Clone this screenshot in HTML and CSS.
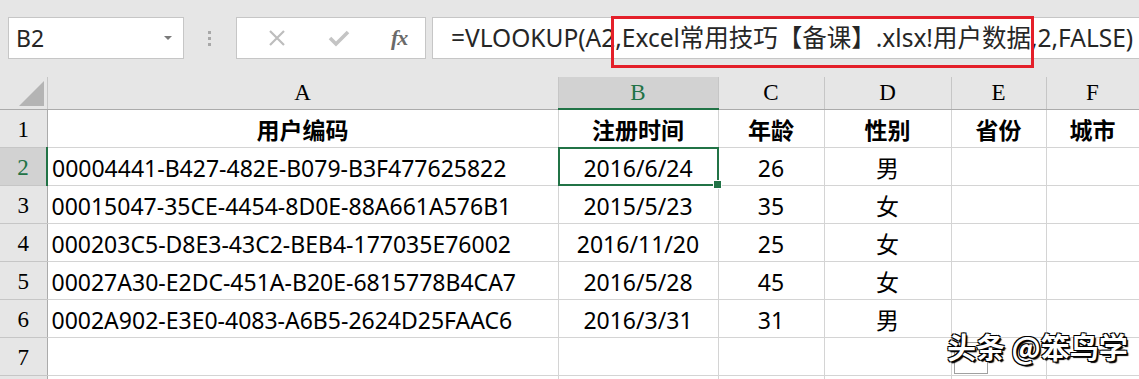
FILE: index.html
```html
<!DOCTYPE html>
<html lang="zh-CN">
<head>
  <meta charset="UTF-8">
  <title>VLOOKUP</title>
  <link rel="stylesheet" href="styles.css">
</head>
<body>
  <div class="app">
    <div class="toolbar">
      <div class="namebox">
        <span>B2</span>
        <span class="caret"></span>
      </div>
      <div class="grip"><i></i><i></i><i></i></div>
      <div class="fxbox">
        <svg class="ico" width="18" height="18" viewBox="0 0 18 18"><path d="M2 2L16 16M16 2L2 16" stroke="#bdbdbd" stroke-width="2.2" fill="none"/></svg>
        <svg class="ico" width="22" height="18" viewBox="0 0 22 18"><path d="M2 9L8 15L20 3" stroke="#c4c4c4" stroke-width="3.6" fill="none"/></svg>
        <span class="fx">fx</span>
      </div>
      <div class="formula">=VLOOKUP(A2,Excel常用技巧【备课】.xlsx!用户数据,2,FALSE)</div>
    </div>

    <table class="sheet">
      <colgroup>
        <col class="c-row">
        <col class="c-a">
        <col class="c-b">
        <col class="c-c">
        <col class="c-d">
        <col class="c-e">
        <col class="c-f">
      </colgroup>
      <tr class="head">
        <th class="corner"><span class="tri"></span></th>
        <th>A</th>
        <th class="sel">B</th>
        <th>C</th>
        <th>D</th>
        <th>E</th>
        <th>F</th>
      </tr>
      <tr>
        <th class="num">1</th>
        <td class="bold">用户编码</td>
        <td class="bold">注册时间</td>
        <td class="bold">年龄</td>
        <td class="bold">性别</td>
        <td class="bold">省份</td>
        <td class="bold">城市</td>
      </tr>
      <tr>
        <th class="num sel">2</th>
        <td class="left">00004441-B427-482E-B079-B3F477625822</td>
        <td class="active">2016/6/24</td>
        <td>26</td>
        <td>男</td>
        <td></td>
        <td></td>
      </tr>
      <tr>
        <th class="num">3</th>
        <td class="left">00015047-35CE-4454-8D0E-88A661A576B1</td>
        <td>2015/5/23</td>
        <td>35</td>
        <td>女</td>
        <td></td>
        <td></td>
      </tr>
      <tr>
        <th class="num">4</th>
        <td class="left">000203C5-D8E3-43C2-BEB4-177035E76002</td>
        <td>2016/11/20</td>
        <td>25</td>
        <td>女</td>
        <td></td>
        <td></td>
      </tr>
      <tr>
        <th class="num">5</th>
        <td class="left">00027A30-E2DC-451A-B20E-6815778B4CA7</td>
        <td>2016/5/28</td>
        <td>45</td>
        <td>女</td>
        <td></td>
        <td></td>
      </tr>
      <tr>
        <th class="num">6</th>
        <td class="left">0002A902-E3E0-4083-A6B5-2624D25FAAC6</td>
        <td>2016/3/31</td>
        <td>31</td>
        <td>男</td>
        <td></td>
        <td></td>
      </tr>
      <tr>
        <th class="num">7</th>
        <td></td>
        <td></td>
        <td></td>
        <td></td>
        <td></td>
        <td></td>
      </tr>
      <tr>
        <th class="num"></th>
        <td></td>
        <td></td>
        <td></td>
        <td></td>
        <td></td>
        <td></td>
      </tr>
    </table>

    <!-- red note box over the formula -->
    <div class="mark"></div>
    <div class="paste"><i></i></div>
    <div class="watermark">头条 @笨鸟学</div>
  </div>
</body>
</html>
```

FILE: styles.css
```css
*{
  margin: 0;
  padding: 0;
  box-sizing: border-box;
}

html, body{
  width: 1139px;
  height: 379px;
  overflow: hidden;
  background: #fff;
}

.app{
  position: relative;
  width: 1139px;
  height: 379px;
  overflow: hidden;
  font-family: "Noto Sans", "Noto Sans CJK SC", sans-serif;
}

/* formula bar */
.toolbar{
  display: flex;
  align-items: center;
  height: 77px;
  padding: 0 0 1px 8px;
  background: #e6e6e6;
}

.toolbar > *{
  flex: none;
}

.namebox{
  display: flex;
  align-items: center;
  justify-content: space-between;
  width: 176px;
  height: 42px;
  padding: 0 11px 0 7px;
  background: #fff;
  border: 1px solid #c6c6c6;
  font-size: 23px;
  color: #262626;
}

.namebox > .caret{
  width: 0;
  height: 0;
  border-left: 4px solid transparent;
  border-right: 4px solid transparent;
  border-top: 4px solid #7a7a7a;
}

.grip{
  display: flex;
  flex-direction: column;
  gap: 3px;
  margin: 0 25px 0 24px;
}

.grip > i{
  width: 3px;
  height: 3px;
  background: #a8a8a8;
}

.fxbox{
  display: flex;
  align-items: center;
  width: 190px;
  height: 42px;
  padding-left: 31px;
  background: #fff;
  border: 1px solid #c6c6c6;
}

.fxbox > .ico:nth-child(2){
  margin-left: 42px;
}

.fx{
  margin-left: 41px;
  font-family: "Liberation Serif", serif;
  font-style: italic;
  font-weight: bold;
  font-size: 22px;
  color: #6a6a6a;
  letter-spacing: -1px;
}

.formula{
  width: 720px;
  height: 42px;
  margin-left: 6px;
  padding-left: 18px;
  line-height: 40px;
  background: #fff;
  border: 1px solid #c6c6c6;
  font-size: 24.5px;
  color: #262626;
  white-space: nowrap;
}

/* grid */
.sheet{
  table-layout: fixed;
  border-collapse: collapse;
  width: 1139px;
  font-size: 23px;
  line-height: 28px;
  color: #000;
}

.c-row{ width: 47px; }
.c-a{ width: 511px; }
.c-b{ width: 160px; }
.c-c{ width: 106px; }
.c-d{ width: 127px; }
.c-e{ width: 95px; }
.c-f{ width: 93px; }

.sheet tr{
  height: 38px;
}

.sheet tr.head{
  height: 32px;
}

.sheet th{
  background: #e6e6e6;
  font-family: "Liberation Serif", serif;
  font-weight: normal;
  font-size: 23px;
  color: #000;
  border-right: 1px solid #c6c6c6;
  border-bottom: 1px solid #ababab;
}

.sheet th.num{
  border-right: 1px solid #ababab;
  border-bottom: 1px solid #c6c6c6;
  padding-top: 4px;
}

.sheet th.sel{
  background: #d2d2d2;
  color: #217346;
}

.head th.sel{
  border-bottom: 2px solid #217346;
}

.sheet th.num.sel{
  border-right: 2px solid #217346;
}

.corner{
  position: relative;
}

.corner > .tri{
  position: absolute;
  right: 3px;
  bottom: 3px;
  width: 0;
  height: 0;
  border-left: 25px solid transparent;
  border-bottom: 25px solid #b4b4b4;
}

.sheet td{
  text-align: center;
  border-right: 1px solid #d4d4d4;
  border-bottom: 1px solid #d4d4d4;
  white-space: nowrap;
  overflow: visible;
  padding-top: 4px;
}

.sheet td.left{
  text-align: left;
  padding-left: 4px;
}

.sheet td.bold{
  font-weight: bold;
}

.sheet td.active{
  position: relative;
}

.sheet td.active::after{
  content: "";
  position: absolute;
  top: -1px;
  left: -1px;
  right: -1px;
  bottom: -1px;
  border: 2px solid #217346;
}

.sheet td.active::before{
  content: "";
  position: absolute;
  right: -4px;
  bottom: -4px;
  width: 7px;
  height: 7px;
  background: #217346;
  border: 1px solid #fff;
  z-index: 1;
}

/* overlays */
.mark{
  position: absolute;
  left: 611px;
  top: 16px;
  width: 423px;
  height: 52px;
  border: 3px solid #e4202a;
}

.paste{
  position: absolute;
  left: 954px;
  top: 342px;
  width: 34px;
  height: 32px;
  border: 1px solid #a0a0a0;
  background: #fff;
}

.paste > i{
  position: absolute;
  left: 12px;
  top: 5px;
  width: 4px;
  height: 3px;
  background: #3a7bff;
}

.watermark{
  position: absolute;
  left: 947px;
  top: 325px;
  font-family: "Noto Sans CJK SC", sans-serif;
  font-size: 29px;
  font-weight: bold;
  color: #fff;
  white-space: nowrap;
  text-shadow: 1px 1px 0 #000, -1px -1px 0 #000, 1px -1px 0 #000, -1px 1px 0 #000, 2px 2px 1px #000;
}
```
